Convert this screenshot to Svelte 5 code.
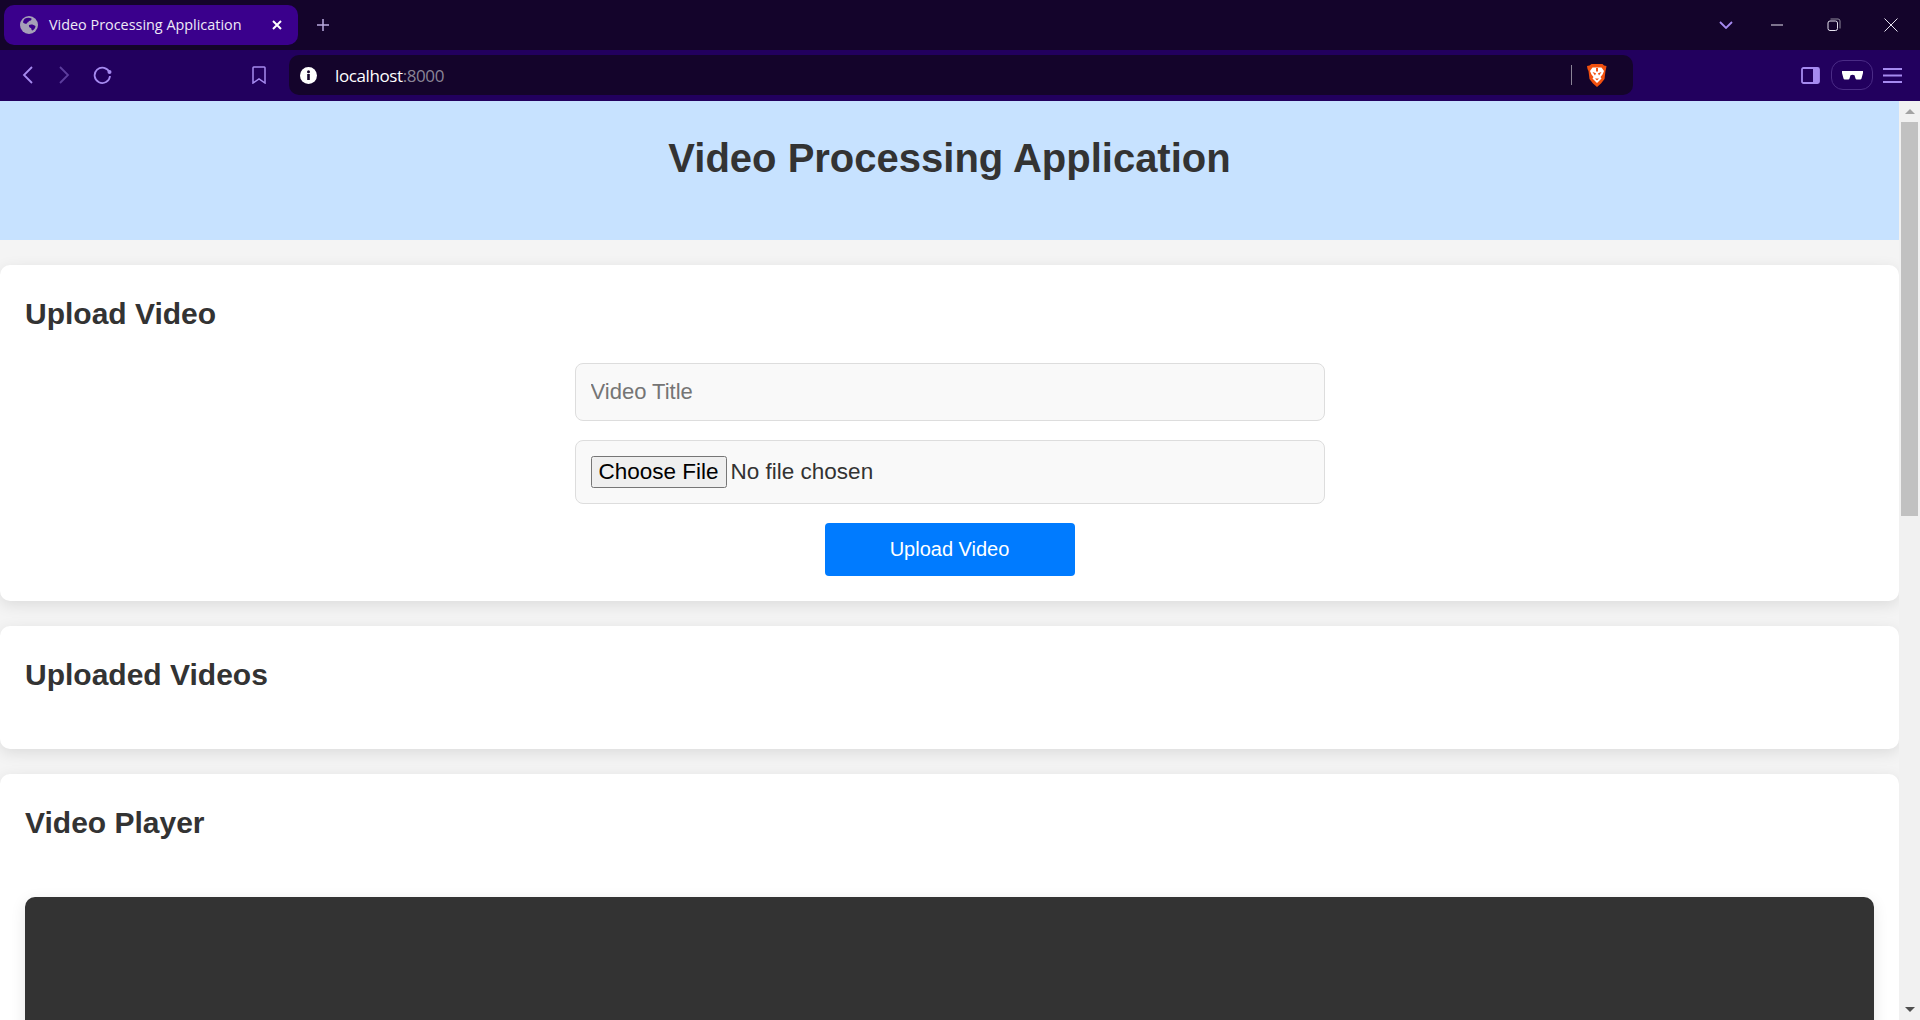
<script>
	let title = 'Video Processing Application';
</script>

<div class="window">
	<!-- Tab strip -->
	<div class="tabstrip">
		<div class="tab">
			<svg class="globe" width="18" height="18" viewBox="0 0 18 18">
				<circle cx="9" cy="9" r="9" fill="#a5a0b8" />
				<path d="M5 2.500c2-1 5-1 6.500 0 .5 1-1 2.500-2.500 2.500-.5 1.500-2.500 1.500-2.500 3-1.500 0-2.500-1-3.500-1.500C3 5 4 3.500 5 2.500zM9 9c2-1 4.500-.5 6.500 1 0 2-1.500 3.500-3 4.500-1 0-1-1.500-1.500-2.500C9.500 12 8.500 10.500 9 9z" fill="#3a008c" />
			</svg>
			<span class="tab-title">{title}</span>
			<svg class="tab-close" width="10" height="10" viewBox="0 0 10 10">
				<path d="M1 1l8 8M9 1l-8 8" stroke="#fff" stroke-width="2" />
			</svg>
		</div>
		<svg class="new-tab" width="14" height="14" viewBox="0 0 14 14">
			<path d="M7 1v12M1 7h12" stroke="#b9aadf" stroke-width="1.500" />
		</svg>
		<div class="spacer"></div>
		<svg class="win-icon chevron" width="14" height="8" viewBox="0 0 14 8">
			<path d="M1 1l6 6 6-6" fill="none" stroke="#a68af0" stroke-width="1.800" />
		</svg>
		<svg class="win-icon" width="14" height="14" viewBox="0 0 14 14">
			<path d="M1 7h12" stroke="#e6e2f0" stroke-width="1" />
		</svg>
		<svg class="win-icon" width="14" height="14" viewBox="0 0 14 14">
			<rect x="1" y="3" width="9.500" height="9.500" rx="2" fill="none" stroke="#e6e2f0" />
			<path d="M3.500 1h7.500a2 2 0 0 1 2 2v7.500" fill="none" stroke="#8f8a9c" />
		</svg>
		<svg class="win-icon last" width="14" height="14" viewBox="0 0 14 14">
			<path d="M.5.5l13 13M13.500.5l-13 13" stroke="#e6e2f0" stroke-width="1" />
		</svg>
	</div>

	<!-- Toolbar -->
	<div class="toolbar">
		<svg class="back" width="11" height="18" viewBox="0 0 11 18">
			<path d="M10 1L2 9l8 8" fill="none" stroke="#a68af0" stroke-width="1.800" />
		</svg>
		<svg class="forward" width="11" height="18" viewBox="0 0 11 18">
			<path d="M1 1l8 8-8 8" fill="none" stroke="#5d3d9e" stroke-width="1.800" />
		</svg>
		<svg class="reload" width="20" height="20" viewBox="0 0 20 20">
			<path d="M16.500 7.500A7.700 7.700 0 1 0 17 11" fill="none" stroke="#a68af0" stroke-width="1.800" />
			<circle cx="16.500" cy="7" r="2" fill="#a68af0" />
		</svg>
		<svg class="bookmark" width="14" height="18" viewBox="0 0 14 18">
			<path d="M1 1.800q0-.8.800-.8h10.400q.8 0 .8.800V17l-6-4-6 4z" fill="none" stroke="#a68af0" stroke-width="1.500" />
		</svg>
		<div class="urlbar">
			<svg class="info" width="17" height="17" viewBox="0 0 17 17">
				<circle cx="8.500" cy="8.500" r="8.500" fill="#fff" />
				<rect x="7.200" y="7" width="2.600" height="6" fill="#15042c" />
				<circle cx="8.500" cy="4.800" r="1.500" fill="#15042c" />
			</svg>
			<span class="url"><span class="host">localhost</span><span class="port">:8000</span></span>
			<div class="spacer"></div>
			<div class="divider"></div>
			<svg class="lion" width="20" height="23" viewBox="0 0 20 23">
				<path d="M4.500 0h11l1.500 1.500 2.500.5-.5 3-.5 2-1 8-3.500 4.500L10 23l-4-3.500L2.500 15l-1-8L.5 5 0 2l2.500-.5z" fill="#f2500f" />
				<path d="M5.500 3.500h9L17 7l-1.500 3.500-2 2.500 1 1.500L10 19l-4.500-4.500 1-1.500-2-2.500L3 7z" fill="#fff" />
				<path d="M5.500 8l3.500 1.200L8 11.500zM14.500 8L11 9.200l1 2.300zM8 14.500h4L10 16.500zM9 4h2v3.500H9z" fill="#f2500f" />
			</svg>
		</div>
		<div class="spacer"></div>
		<svg class="sidebar" width="19" height="17" viewBox="0 0 19 17">
			<rect x="1" y="1" width="17" height="15" rx="1.500" fill="none" stroke="#a68af0" stroke-width="1.800" />
			<rect x="12" y="1" width="6" height="15" fill="#a68af0" />
		</svg>
		<div class="shields">
			<svg width="21" height="9" viewBox="0 0 21 9">
				<path d="M0 0h21v2l-1.500 5.500q-.3 1-1.300 1h-3.400q-1 0-1.300-1L12.500 4.200q-2-1-4 0L7.500 7.500q-.3 1-1.300 1H2.800q-1 0-1.300-1L0 2z" fill="#fff" />
			</svg>
		</div>
		<svg class="menu" width="19" height="15" viewBox="0 0 19 15">
			<path d="M0 1h19M0 7.500h19M0 14h19" stroke="#a68af0" stroke-width="1.800" />
		</svg>
	</div>

	<!-- Page -->
	<div class="viewport">
		<div class="page">
			<header class="banner">
				<h1>{title}</h1>
			</header>

			<section class="card">
				<h2>Upload Video</h2>
				<form class="upload" onsubmit={(e) => e.preventDefault()}>
					<input class="field" type="text" placeholder="Video Title" />
					<input class="field file" type="file" />
					<button class="submit" type="submit">Upload Video</button>
				</form>
			</section>

			<section class="card">
				<h2>Uploaded Videos</h2>
				<div class="list"></div>
			</section>

			<section class="card">
				<h2>Video Player</h2>
				<div class="player"></div>
			</section>
		</div>

		<div class="scrollbar">
			<div class="arrow-up"></div>
			<div class="thumb"></div>
			<div class="spacer"></div>
			<div class="arrow-down"></div>
		</div>
	</div>
</div>

<style>
	:global(body) {
		margin: 0;
		overflow: hidden;
	}

	.window {
		width: 1920px;
		height: 1020px;
		display: flex;
		flex-direction: column;
		overflow: hidden;
		font-family: 'Liberation Sans', Arial, sans-serif;
	}

	.spacer {
		flex: 1;
	}

	/* Browser chrome */
	.tabstrip {
		height: 50px;
		flex-shrink: 0;
		display: flex;
		align-items: center;
		background: #14042b;
		padding: 5px 0 5px 4px;
		box-sizing: border-box;
	}

	.tab {
		width: 294px;
		height: 40px;
		box-sizing: border-box;
		display: flex;
		align-items: center;
		padding: 0 16px 0 16px;
		background: #3a008c;
		border-radius: 10px;
	}

	.tab-title {
		margin-left: 11px;
		padding-bottom: 2px;
		font: 14.400px 'Open Sans', sans-serif;
		color: #eee9f7;
		white-space: nowrap;
	}

	.tab-close {
		margin-left: auto;
	}

	.new-tab {
		margin-left: 18px;
	}

	.win-icon {
		margin-right: 43px;
	}

	.win-icon.chevron {
		margin-right: 37px;
	}

	.win-icon.last {
		margin-right: 22px;
	}

	.toolbar {
		height: 51px;
		flex-shrink: 0;
		display: flex;
		align-items: center;
		background: #22005e;
		box-sizing: border-box;
		padding-bottom: 1px;
	}

	.back {
		margin-left: 22px;
	}

	.forward {
		margin-left: 26px;
	}

	.reload {
		margin-left: 23px;
	}

	.bookmark {
		margin-left: 139px;
	}

	.urlbar {
		width: 1344px;
		height: 40px;
		margin-left: 23px;
		box-sizing: border-box;
		display: flex;
		align-items: center;
		padding: 0 26px 0 11px;
		background: #14042b;
		border-radius: 10px;
	}

	.url {
		margin-left: 18px;
		font: 17px 'Open Sans', sans-serif;
		letter-spacing: -0.4px;
	}

	.host {
		color: #fff;
	}

	.port {
		color: #8a8496;
	}

	.divider {
		width: 1px;
		height: 20px;
		background: #8a8496;
	}

	.lion {
		margin-left: 15px;
	}

	.sidebar {
		margin-right: 11px;
	}

	.shields {
		width: 42px;
		height: 30px;
		display: flex;
		align-items: center;
		justify-content: center;
		box-sizing: border-box;
		border: 1px solid #4a2b86;
		border-radius: 12px;
		margin-right: 10px;
	}

	.menu {
		margin-right: 18px;
	}

	/* Page */
	.viewport {
		flex: 1;
		min-height: 0;
		display: flex;
	}

	.page {
		flex: 1;
		min-width: 0;
		overflow: hidden;
		background: #f4f4f4;
		color: #333;
	}

	.banner {
		height: 139px;
		box-sizing: border-box;
		padding-top: 34px;
		background: #c7e2ff;
		text-align: center;
	}

	h1 {
		margin: 0;
		font-size: 40px;
		line-height: 46px;
		font-weight: 700;
		color: #333;
	}

	.card {
		margin-top: 25px;
		padding: 25px;
		background: #fff;
		border-radius: 10px;
		box-shadow: 0 4px 15px rgba(0, 0, 0, 0.1);
	}

	h2 {
		margin: 0;
		padding-top: 1px;
		font-size: 30px;
		line-height: 46px;
		font-weight: 700;
		color: #333;
	}

	.upload {
		margin-top: 26px;
		display: flex;
		flex-direction: column;
		align-items: center;
	}

	.field {
		width: 750px;
		box-sizing: border-box;
		margin-bottom: 19px;
		padding: 15px;
		font-family: 'Liberation Sans', Arial, sans-serif;
		font-size: 22px;
		color: #333;
		background: #f9f9f9;
		border: 1px solid #ddd;
		border-radius: 8px;
	}

	.field.file {
		font-size: 22.500px;
		height: 64px;
		padding-top: 0;
		padding-bottom: 0;
		line-height: 62px;
	}

	.submit {
		width: 250px;
		height: 53px;
		font-family: 'Liberation Sans', Arial, sans-serif;
		font-size: 20px;
		color: #fff;
		background: #007bff;
		border: 0;
		border-radius: 4px;
	}

	.list {
		height: 26px;
	}

	.player {
		height: 400px;
		margin-top: 51px;
		background: #333;
		border-radius: 10px;
		box-shadow: 0 4px 15px rgba(0, 0, 0, 0.1);
	}

	/* Scrollbar */
	.scrollbar {
		width: 21px;
		flex-shrink: 0;
		display: flex;
		flex-direction: column;
		align-items: center;
		background: #f1f1f1;
	}

	.arrow-up,
	.arrow-down {
		width: 0;
		height: 0;
		margin: 8px 0;
		border-left: 5px solid transparent;
		border-right: 5px solid transparent;
	}

	.arrow-up {
		border-bottom: 5px solid #a3a3a3;
	}

	.arrow-down {
		border-top: 5px solid #505050;
	}

	.thumb {
		width: 17px;
		height: 394px;
		background: #c1c1c1;
	}
</style>
